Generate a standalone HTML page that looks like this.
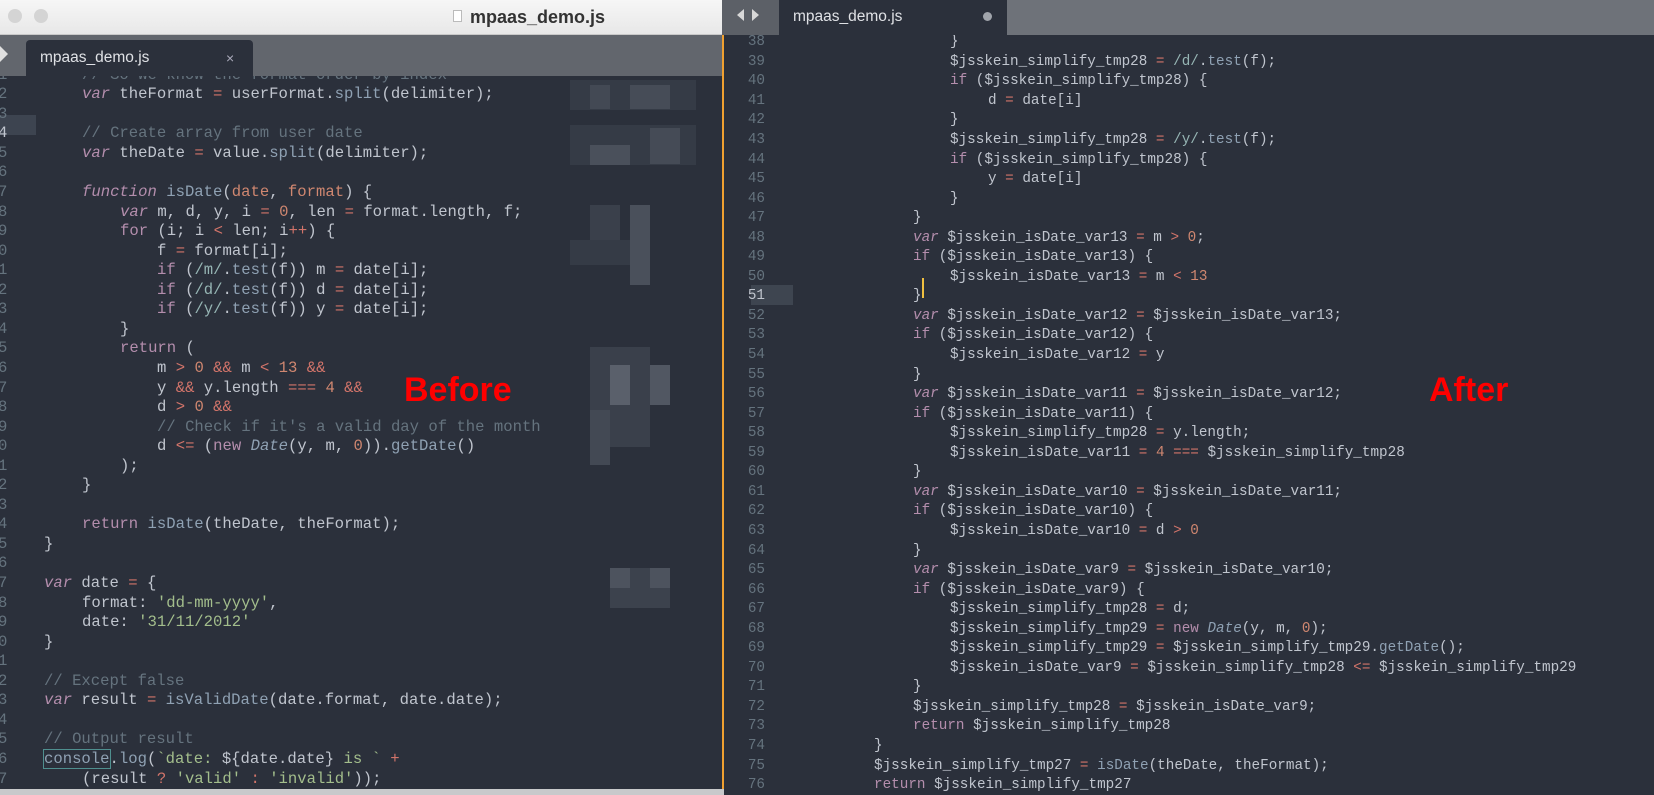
<!DOCTYPE html>
<html><head><meta charset="utf-8">
<style>
*{margin:0;padding:0;box-sizing:border-box}
body{width:1654px;height:795px;overflow:hidden;background:#2b303b;position:relative;font-family:"Liberation Mono",monospace}
.p{position:absolute;overflow:hidden}
.ln{position:absolute;white-space:pre;color:#c0c5ce;height:19.55px;line-height:19.55px}
.L .ln{font-size:15.6px}
.R .ln{font-size:14.3px}
.k{color:#b48ead}.ki{color:#b48ead;font-style:italic}
.f{color:#8fa1b3}.fi{color:#8fa1b3;font-style:italic}
.n{color:#d08770}.o{color:#d2746a}.s{color:#a3be8c}.c{color:#65737e}.r{color:#96b5b4}.pa{color:#d08770}
.g{position:absolute;color:#65737e;text-align:right;font-size:14.3px;height:19.55px;line-height:19.55px;width:40px}
.gl{position:absolute;color:#65737e;font-size:15.6px;height:19.55px;line-height:19.55px;left:-2px}
.px{position:absolute}
.lab{position:absolute;color:#ff0000;font-family:"Liberation Sans Narrow","Liberation Sans",sans-serif;font-weight:bold;font-size:34px;line-height:40px}
</style></head><body>

<div class="p L" style="left:0;top:0;width:722px;height:795px;background:#2b303b">
<div class="px" style="left:0;top:115px;width:36px;height:19.5px;background:#3d4450"></div>
<div class="px" style="left:570px;top:80px;width:126px;height:30px;background:#353b46"></div>
<div class="px" style="left:590px;top:85px;width:20px;height:24px;background:#434954"></div>
<div class="px" style="left:630px;top:85px;width:40px;height:24px;background:#464c57"></div>
<div class="px" style="left:570px;top:125px;width:126px;height:40px;background:#353b46"></div>
<div class="px" style="left:590px;top:145px;width:40px;height:20px;background:#4a505b"></div>
<div class="px" style="left:650px;top:128px;width:30px;height:36px;background:#454b56"></div>
<div class="px" style="left:590px;top:205px;width:30px;height:60px;background:#3a404b"></div>
<div class="px" style="left:630px;top:205px;width:20px;height:80px;background:#4a505b"></div>
<div class="px" style="left:570px;top:240px;width:60px;height:25px;background:#353b46"></div>
<div class="px" style="left:590px;top:347px;width:60px;height:100px;background:#3a404b"></div>
<div class="px" style="left:610px;top:365px;width:20px;height:40px;background:#5a606b"></div>
<div class="px" style="left:650px;top:365px;width:20px;height:40px;background:#515762"></div>
<div class="px" style="left:590px;top:410px;width:20px;height:55px;background:#434954"></div>
<div class="px" style="left:610px;top:568px;width:60px;height:40px;background:#3c424d"></div>
<div class="px" style="left:610px;top:568px;width:20px;height:20px;background:#4d535e"></div>
<div class="px" style="left:650px;top:568px;width:20px;height:20px;background:#4d535e"></div>
<div class="px" style="left:0;top:789px;width:722px;height:6px;background:#c8c9cb"></div>
</div>

<div class="p L" style="left:0;top:76px;width:722px;height:713px">
<div style="position:absolute;left:0;top:-10.3px">
<div class="gl" style="top:0">1</div><div class="ln" style="left:82px;top:0"><span class="c">// So we know the format order by index</span></div>
<div class="gl" style="top:19.55px">2</div><div class="ln" style="left:82px;top:19.55px"><span class="ki">var</span> theFormat <span class="o">=</span> userFormat.<span class="f">split</span>(delimiter);</div>
<div class="gl" style="top:39.1px">3</div>
<div class="gl" style="top:58.65px;color:#c0c5ce">4</div><div class="ln" style="left:82px;top:58.65px"><span class="c">// Create array from user date</span></div>
<div class="gl" style="top:78.2px">5</div><div class="ln" style="left:82px;top:78.2px"><span class="ki">var</span> theDate <span class="o">=</span> value.<span class="f">split</span>(delimiter);</div>
<div class="gl" style="top:97.75px">6</div>
<div class="gl" style="top:117.3px">7</div><div class="ln" style="left:82px;top:117.3px"><span class="ki">function</span> <span class="f">isDate</span>(<span class="pa">date</span>, <span class="pa">format</span>) {</div>
<div class="gl" style="top:136.85px">8</div><div class="ln" style="left:120px;top:136.85px"><span class="ki">var</span> m, d, y, i <span class="o">=</span> <span class="n">0</span>, len <span class="o">=</span> format.length, f;</div>
<div class="gl" style="top:156.4px">9</div><div class="ln" style="left:120px;top:156.4px"><span class="k">for</span> (i; i <span class="o">&lt;</span> len; i<span class="o">++</span>) {</div>
<div class="gl" style="top:175.95px">0</div><div class="ln" style="left:157px;top:175.95px">f <span class="o">=</span> format[i];</div>
<div class="gl" style="top:195.5px">1</div><div class="ln" style="left:157px;top:195.5px"><span class="k">if</span> (<span class="r">/m/</span>.<span class="f">test</span>(f)) m <span class="o">=</span> date[i];</div>
<div class="gl" style="top:215.05px">2</div><div class="ln" style="left:157px;top:215.05px"><span class="k">if</span> (<span class="r">/d/</span>.<span class="f">test</span>(f)) d <span class="o">=</span> date[i];</div>
<div class="gl" style="top:234.6px">3</div><div class="ln" style="left:157px;top:234.6px"><span class="k">if</span> (<span class="r">/y/</span>.<span class="f">test</span>(f)) y <span class="o">=</span> date[i];</div>
<div class="gl" style="top:254.15px">4</div><div class="ln" style="left:120px;top:254.15px">}</div>
<div class="gl" style="top:273.7px">5</div><div class="ln" style="left:120px;top:273.7px"><span class="k">return</span> (</div>
<div class="gl" style="top:293.25px">6</div><div class="ln" style="left:157px;top:293.25px">m <span class="o">&gt;</span> <span class="n">0</span> <span class="o">&amp;&amp;</span> m <span class="o">&lt;</span> <span class="n">13</span> <span class="o">&amp;&amp;</span></div>
<div class="gl" style="top:312.8px">7</div><div class="ln" style="left:157px;top:312.8px">y <span class="o">&amp;&amp;</span> y.length <span class="o">===</span> <span class="n">4</span> <span class="o">&amp;&amp;</span></div>
<div class="gl" style="top:332.35px">8</div><div class="ln" style="left:157px;top:332.35px">d <span class="o">&gt;</span> <span class="n">0</span> <span class="o">&amp;&amp;</span></div>
<div class="gl" style="top:351.9px">9</div><div class="ln" style="left:157px;top:351.9px"><span class="c">// Check if it's a valid day of the month</span></div>
<div class="gl" style="top:371.45px">0</div><div class="ln" style="left:157px;top:371.45px">d <span class="o">&lt;=</span> (<span class="k">new</span> <span class="fi">Date</span>(y, m, <span class="n">0</span>)).<span class="f">getDate</span>()</div>
<div class="gl" style="top:391px">1</div><div class="ln" style="left:120px;top:391px">);</div>
<div class="gl" style="top:410.55px">2</div><div class="ln" style="left:82px;top:410.55px">}</div>
<div class="gl" style="top:430.1px">3</div>
<div class="gl" style="top:449.65px">4</div><div class="ln" style="left:82px;top:449.65px"><span class="k">return</span> <span class="f">isDate</span>(theDate, theFormat);</div>
<div class="gl" style="top:469.2px">5</div><div class="ln" style="left:44px;top:469.2px">}</div>
<div class="gl" style="top:488.75px">6</div>
<div class="gl" style="top:508.3px">7</div><div class="ln" style="left:44px;top:508.3px"><span class="ki">var</span> date <span class="o">=</span> {</div>
<div class="gl" style="top:527.85px">8</div><div class="ln" style="left:82px;top:527.85px">format: <span class="s">'dd-mm-yyyy'</span>,</div>
<div class="gl" style="top:547.4px">9</div><div class="ln" style="left:82px;top:547.4px">date: <span class="s">'31/11/2012'</span></div>
<div class="gl" style="top:566.95px">0</div><div class="ln" style="left:44px;top:566.95px">}</div>
<div class="gl" style="top:586.5px">1</div>
<div class="gl" style="top:606.05px">2</div><div class="ln" style="left:44px;top:606.05px"><span class="c">// Except false</span></div>
<div class="gl" style="top:625.6px">3</div><div class="ln" style="left:44px;top:625.6px"><span class="ki">var</span> result <span class="o">=</span> <span class="f">isValidDate</span>(date.format, date.date);</div>
<div class="gl" style="top:645.15px">4</div>
<div class="gl" style="top:664.7px">5</div><div class="ln" style="left:44px;top:664.7px"><span class="c">// Output result</span></div>
<div class="gl" style="top:684.25px">6</div><div class="ln" style="left:44px;top:684.25px"><span class="f" style="outline:1px solid #4f8f8f">console</span>.<span class="f">log</span>(<span class="s">`date: </span>${date.date}<span class="s"> is `</span> <span class="o">+</span></div>
<div class="gl" style="top:703.8px">7</div><div class="ln" style="left:82px;top:703.8px">(result <span class="o">?</span> <span class="s">'valid'</span> <span class="o">:</span> <span class="s">'invalid'</span>));</div>
</div>
</div>

<div class="px" style="left:0;top:0;width:722px;height:35px;background:linear-gradient(#f6f6f6,#e8e8e8);border-bottom:1px solid #c9c9c9"></div>
<div class="px" style="left:8px;top:9px;width:14px;height:14px;border-radius:50%;background:#d4d4d4"></div>
<div class="px" style="left:34px;top:9px;width:14px;height:14px;border-radius:50%;background:#d4d4d4"></div>
<div class="px" style="left:453px;top:10px;width:9px;height:12px;background:#fff;border:1px solid #bbb"></div>
<div class="px" style="left:470px;top:4px;font-family:'Liberation Sans',sans-serif;font-weight:bold;font-size:18px;color:#333;line-height:26px">mpaas_demo.js</div>
<div class="px" style="left:0;top:35px;width:722px;height:41px;background:#62666d"></div>
<div class="px" style="left:0;top:46px;width:0;height:0;border-top:8px solid transparent;border-bottom:8px solid transparent;border-left:8px solid #e0e0e0"></div>
<div class="px" style="left:26px;top:40px;width:227px;height:36px;background:#2b303b;border-radius:4px 4px 0 0"></div>
<div class="px" style="left:40px;top:46px;font-family:'Liberation Sans',sans-serif;font-size:15.5px;color:#dfe1e5;line-height:24px">mpaas_demo.js</div>
<div class="px" style="left:226px;top:46px;font-family:'Liberation Sans',sans-serif;font-size:14px;color:#aab;line-height:24px">×</div>

<div class="lab" style="left:404px;top:370px">Before</div>

<div class="p R" style="left:722px;top:0;width:932px;height:795px;background:#2b303b">
<div class="px" style="left:29px;top:285px;width:42px;height:19.5px;background:#3e4550"></div>
<div class="px" style="left:200px;top:278px;width:2px;height:20px;background:#f0c040"></div>
</div>

<div class="p R" style="left:722px;top:35px;width:932px;height:760px">
<div style="position:absolute;left:0;top:-1.8px">
<div class="g" style="left:3px;top:0">38</div><div class="ln" style="left:228px;top:0">}</div>
<div class="g" style="left:3px;top:19.55px">39</div><div class="ln" style="left:228px;top:19.55px">$jsskein_simplify_tmp28 <span class="o">=</span> <span class="r">/d/</span>.<span class="f">test</span>(f);</div>
<div class="g" style="left:3px;top:39.1px">40</div><div class="ln" style="left:228px;top:39.1px"><span class="k">if</span> ($jsskein_simplify_tmp28) {</div>
<div class="g" style="left:3px;top:58.65px">41</div><div class="ln" style="left:266px;top:58.65px">d <span class="o">=</span> date[i]</div>
<div class="g" style="left:3px;top:78.2px">42</div><div class="ln" style="left:228px;top:78.2px">}</div>
<div class="g" style="left:3px;top:97.75px">43</div><div class="ln" style="left:228px;top:97.75px">$jsskein_simplify_tmp28 <span class="o">=</span> <span class="r">/y/</span>.<span class="f">test</span>(f);</div>
<div class="g" style="left:3px;top:117.3px">44</div><div class="ln" style="left:228px;top:117.3px"><span class="k">if</span> ($jsskein_simplify_tmp28) {</div>
<div class="g" style="left:3px;top:136.85px">45</div><div class="ln" style="left:266px;top:136.85px">y <span class="o">=</span> date[i]</div>
<div class="g" style="left:3px;top:156.4px">46</div><div class="ln" style="left:228px;top:156.4px">}</div>
<div class="g" style="left:3px;top:175.95px">47</div><div class="ln" style="left:191px;top:175.95px">}</div>
<div class="g" style="left:3px;top:195.5px">48</div><div class="ln" style="left:191px;top:195.5px"><span class="ki">var</span> $jsskein_isDate_var13 <span class="o">=</span> m <span class="o">&gt;</span> <span class="n">0</span>;</div>
<div class="g" style="left:3px;top:215.05px">49</div><div class="ln" style="left:191px;top:215.05px"><span class="k">if</span> ($jsskein_isDate_var13) {</div>
<div class="g" style="left:3px;top:234.6px">50</div><div class="ln" style="left:228px;top:234.6px">$jsskein_isDate_var13 <span class="o">=</span> m <span class="o">&lt;</span> <span class="n">13</span></div>
<div class="g" style="left:3px;top:254.15px;color:#c0c5ce">51</div><div class="ln" style="left:191px;top:254.15px">}</div>
<div class="g" style="left:3px;top:273.7px">52</div><div class="ln" style="left:191px;top:273.7px"><span class="ki">var</span> $jsskein_isDate_var12 <span class="o">=</span> $jsskein_isDate_var13;</div>
<div class="g" style="left:3px;top:293.25px">53</div><div class="ln" style="left:191px;top:293.25px"><span class="k">if</span> ($jsskein_isDate_var12) {</div>
<div class="g" style="left:3px;top:312.8px">54</div><div class="ln" style="left:228px;top:312.8px">$jsskein_isDate_var12 <span class="o">=</span> y</div>
<div class="g" style="left:3px;top:332.35px">55</div><div class="ln" style="left:191px;top:332.35px">}</div>
<div class="g" style="left:3px;top:351.9px">56</div><div class="ln" style="left:191px;top:351.9px"><span class="ki">var</span> $jsskein_isDate_var11 <span class="o">=</span> $jsskein_isDate_var12;</div>
<div class="g" style="left:3px;top:371.45px">57</div><div class="ln" style="left:191px;top:371.45px"><span class="k">if</span> ($jsskein_isDate_var11) {</div>
<div class="g" style="left:3px;top:391px">58</div><div class="ln" style="left:228px;top:391px">$jsskein_simplify_tmp28 <span class="o">=</span> y.length;</div>
<div class="g" style="left:3px;top:410.55px">59</div><div class="ln" style="left:228px;top:410.55px">$jsskein_isDate_var11 <span class="o">=</span> <span class="n">4</span> <span class="o">===</span> $jsskein_simplify_tmp28</div>
<div class="g" style="left:3px;top:430.1px">60</div><div class="ln" style="left:191px;top:430.1px">}</div>
<div class="g" style="left:3px;top:449.65px">61</div><div class="ln" style="left:191px;top:449.65px"><span class="ki">var</span> $jsskein_isDate_var10 <span class="o">=</span> $jsskein_isDate_var11;</div>
<div class="g" style="left:3px;top:469.2px">62</div><div class="ln" style="left:191px;top:469.2px"><span class="k">if</span> ($jsskein_isDate_var10) {</div>
<div class="g" style="left:3px;top:488.75px">63</div><div class="ln" style="left:228px;top:488.75px">$jsskein_isDate_var10 <span class="o">=</span> d <span class="o">&gt;</span> <span class="n">0</span></div>
<div class="g" style="left:3px;top:508.3px">64</div><div class="ln" style="left:191px;top:508.3px">}</div>
<div class="g" style="left:3px;top:527.85px">65</div><div class="ln" style="left:191px;top:527.85px"><span class="ki">var</span> $jsskein_isDate_var9 <span class="o">=</span> $jsskein_isDate_var10;</div>
<div class="g" style="left:3px;top:547.4px">66</div><div class="ln" style="left:191px;top:547.4px"><span class="k">if</span> ($jsskein_isDate_var9) {</div>
<div class="g" style="left:3px;top:566.95px">67</div><div class="ln" style="left:228px;top:566.95px">$jsskein_simplify_tmp28 <span class="o">=</span> d;</div>
<div class="g" style="left:3px;top:586.5px">68</div><div class="ln" style="left:228px;top:586.5px">$jsskein_simplify_tmp29 <span class="o">=</span> <span class="k">new</span> <span class="fi">Date</span>(y, m, <span class="n">0</span>);</div>
<div class="g" style="left:3px;top:606.05px">69</div><div class="ln" style="left:228px;top:606.05px">$jsskein_simplify_tmp29 <span class="o">=</span> $jsskein_simplify_tmp29.<span class="f">getDate</span>();</div>
<div class="g" style="left:3px;top:625.6px">70</div><div class="ln" style="left:228px;top:625.6px">$jsskein_isDate_var9 <span class="o">=</span> $jsskein_simplify_tmp28 <span class="o">&lt;=</span> $jsskein_simplify_tmp29</div>
<div class="g" style="left:3px;top:645.15px">71</div><div class="ln" style="left:191px;top:645.15px">}</div>
<div class="g" style="left:3px;top:664.7px">72</div><div class="ln" style="left:191px;top:664.7px">$jsskein_simplify_tmp28 <span class="o">=</span> $jsskein_isDate_var9;</div>
<div class="g" style="left:3px;top:684.25px">73</div><div class="ln" style="left:191px;top:684.25px"><span class="k">return</span> $jsskein_simplify_tmp28</div>
<div class="g" style="left:3px;top:703.8px">74</div><div class="ln" style="left:152px;top:703.8px">}</div>
<div class="g" style="left:3px;top:723.35px">75</div><div class="ln" style="left:152px;top:723.35px">$jsskein_simplify_tmp27 <span class="o">=</span> <span class="f">isDate</span>(theDate, theFormat);</div>
<div class="g" style="left:3px;top:742.9px">76</div><div class="ln" style="left:152px;top:742.9px"><span class="k">return</span> $jsskein_simplify_tmp27</div>
</div>
</div>

<div class="px" style="left:722px;top:0;width:932px;height:35px;background:#6e7279"></div>
<div class="px" style="left:722px;top:0;width:57px;height:35px;background:#5c6067"></div>
<div class="px" style="left:737px;top:9px;width:0;height:0;border-top:6px solid transparent;border-bottom:6px solid transparent;border-right:7px solid #d8d8d8"></div>
<div class="px" style="left:752px;top:9px;width:0;height:0;border-top:6px solid transparent;border-bottom:6px solid transparent;border-left:7px solid #d8d8d8"></div>
<div class="px" style="left:779px;top:0;width:228px;height:35px;background:#2b303b"></div>
<div class="px" style="left:793px;top:5px;font-family:'Liberation Sans',sans-serif;font-size:15.5px;color:#dfe1e5;line-height:24px">mpaas_demo.js</div>
<div class="px" style="left:983px;top:12px;width:9px;height:9px;border-radius:50%;background:#a0a4ab"></div>
<div class="px" style="left:722px;top:35px;width:2px;height:760px;background:#f0a030"></div>
<div class="px" style="left:722px;top:789px;width:2px;height:6px;background:#c8c9cb"></div>

<div class="lab" style="left:1429px;top:370px">After</div>
</body></html>
